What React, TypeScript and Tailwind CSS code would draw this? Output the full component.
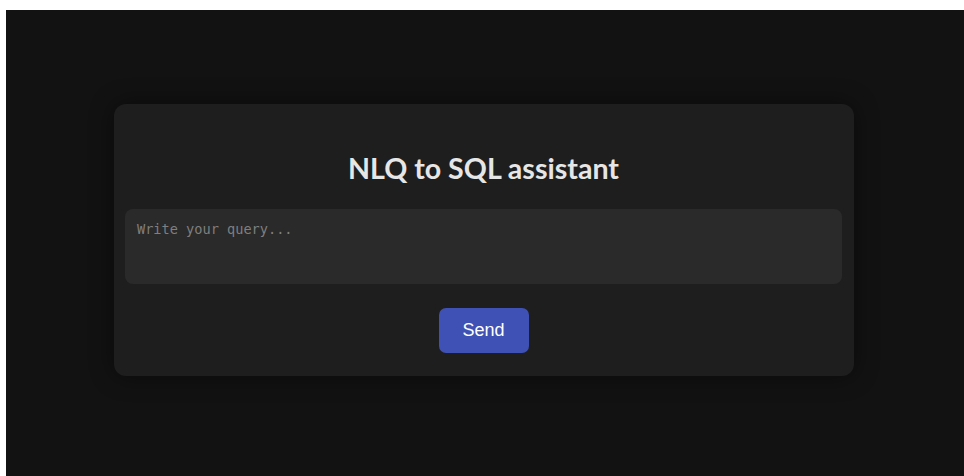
import React, { useState } from 'react';

export default function App() {
  const [query, setQuery] = useState('');

  return (
    <div className="min-h-[476px] bg-white pl-[6px] pt-[10px]">
      <div className="min-h-[466px] bg-[#121212] pt-[94px] pl-[108px]">
        <div className="w-[740px] h-[272px] rounded-xl bg-[#1e1e1e] pl-[11px] pr-[12px] shadow-[0_0_24px_rgba(0,0,0,0.45)]">
          <h1
            className="pt-[45px] text-center text-[28.6px] font-bold leading-[38px] text-[#e6e6e6]"
            style={{ fontFamily: 'Lato, "Open Sans", sans-serif' }}
          >
            NLQ to SQL assistant
          </h1>
          <textarea
            value={query}
            onChange={(e) => setQuery(e.target.value)}
            placeholder="Write your query..."
            className="mt-[22px] block h-[75px] w-full resize-none rounded-lg bg-[#2a2a2a] px-[12px] py-[12px] text-[13.6px] leading-[16px] text-[#ddd] placeholder:text-[#7f7f7f] outline-none"
            style={{ fontFamily: '"DejaVu Sans Mono", "Liberation Mono", monospace' }}
          />
          <div className="mt-[24px] flex justify-center">
            <button
              className="h-[45px] w-[90px] rounded-[7px] bg-[#3f51b5] text-[18px] text-white"
              style={{ fontFamily: '"Liberation Sans", Arial, sans-serif' }}
            >
              Send
            </button>
          </div>
        </div>
      </div>
    </div>
  );
}
